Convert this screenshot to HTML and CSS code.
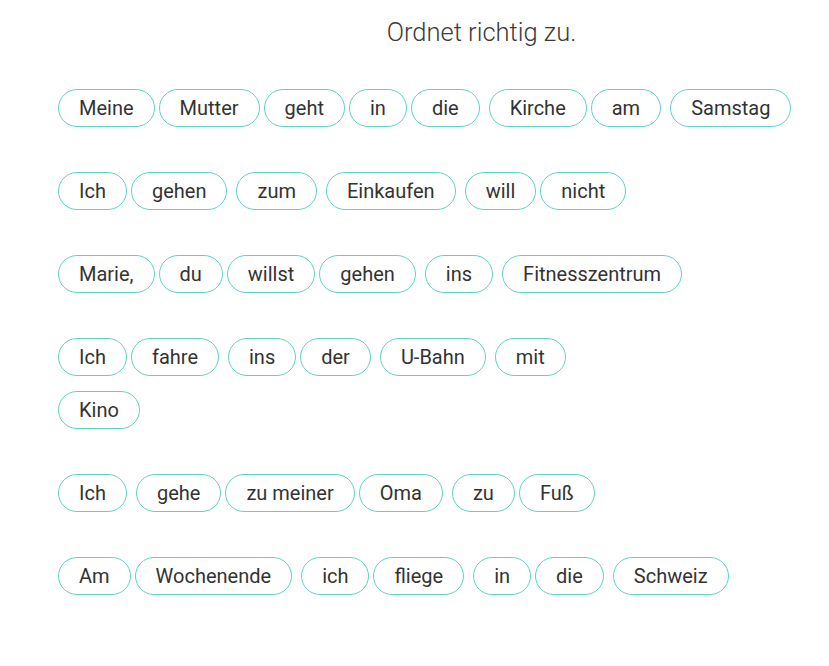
FILE: index.html
```html
<!DOCTYPE html>
<html>

<head>
    <title>Ordnet richtig zu</title>
    <link rel="stylesheet" href="styles.css">
</head>

<body>
    <div id="exercise">
        <h2 class="title">Ordnet richtig zu.</h2>

        <div class="sentence">
            <div class="line">
                <span class="word">Meine</span>
                <span class="word">Mutter</span>
                <span class="word">geht</span>
                <span class="word">in</span>
                <span class="word">die</span>
                <span class="word spaced">Kirche</span>
                <span class="word">am</span>
                <span class="word spaced">Samstag</span>
            </div>
        </div>

        <div class="sentence">
            <div class="line">
                <span class="word">Ich</span>
                <span class="word">gehen</span>
                <span class="word spaced">zum</span>
                <span class="word spaced">Einkaufen</span>
                <span class="word spaced">will</span>
                <span class="word">nicht</span>
            </div>
        </div>

        <div class="sentence">
            <div class="line">
                <span class="word">Marie,</span>
                <span class="word">du</span>
                <span class="word">willst</span>
                <span class="word">gehen</span>
                <span class="word spaced">ins</span>
                <span class="word spaced">Fitnesszentrum</span>
            </div>
        </div>

        <div class="sentence">
            <div class="line">
                <span class="word">Ich</span>
                <span class="word">fahre</span>
                <span class="word spaced">ins</span>
                <span class="word">der</span>
                <span class="word spaced">U-Bahn</span>
                <span class="word spaced">mit</span>
            </div>
            <div class="line">
                <span class="word">Kino</span>
            </div>
        </div>

        <div class="sentence">
            <div class="line">
                <span class="word">Ich</span>
                <span class="word spaced">gehe</span>
                <span class="word">zu meiner</span>
                <span class="word">Oma</span>
                <span class="word spaced">zu</span>
                <span class="word">Fuß</span>
            </div>
        </div>

        <div class="sentence">
            <div class="line">
                <span class="word">Am</span>
                <span class="word">Wochenende</span>
                <span class="word spaced">ich</span>
                <span class="word">fliege</span>
                <span class="word spaced">in</span>
                <span class="word">die</span>
                <span class="word spaced">Schweiz</span>
            </div>
        </div>
    </div>
</body>

</html>
```

FILE: styles.css
```css
body {
    margin: 0;
    background: #fff;
    font-family: Roboto, "Liberation Sans", sans-serif;
    color: #333;
}

#exercise {
    padding: 16px 0 0 58px;
}

.title {
    margin: 0 0 41px 0;
    padding-left: 76px;
    text-align: center;
    font-size: 25.5px;
    font-weight: 300;
    color: #3a3a3a;
    line-height: 32px;
}

.sentence {
    display: flex;
    flex-direction: column;
    gap: 15px;
    margin-bottom: 45px;
}

.line {
    display: flex;
    gap: 4px;
}

.word {
    box-sizing: border-box;
    height: 38px;
    padding: 0 20px;
    border: 1px solid #5fd2c6;
    border-radius: 19px;
    font-size: 20px;
    line-height: 36px;
    white-space: nowrap;
}

.spaced {
    margin-left: 5px;
}
```
